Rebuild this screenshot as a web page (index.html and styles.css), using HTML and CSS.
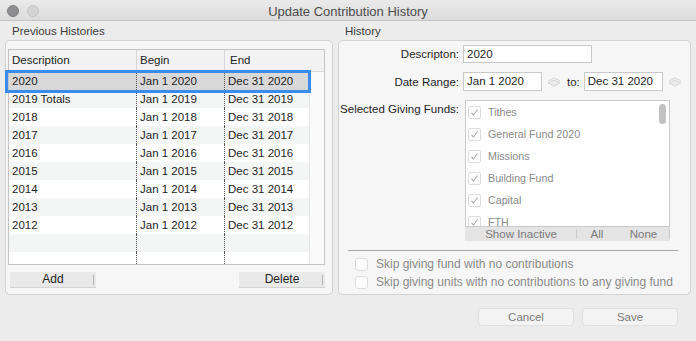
FILE: index.html
```html
<!DOCTYPE html>
<html lang="en">
<head>
<meta charset="utf-8">
<title>Update Contribution History</title>
<link rel="stylesheet" href="styles.css">
</head>
<body>
<div class="window">
  <div class="titlebar">
    <div class="lights"><span class="light close"></span><span class="light min"></span></div>
    <div class="title">Update Contribution History</div>
    <div></div>
  </div>

  <div class="main">
    <section class="col col-left">
      <div class="section-label">Previous Histories</div>
      <div class="groupbox left-box">
        <div class="table">
          <div class="thead">
            <div class="th">Description</div>
            <div class="th">Begin</div>
            <div class="th th-end">End</div>
            <div class="th"></div>
          </div>
          <div class="tbody">
            <div class="rows">
              <div class="row selected"><div class="td">2020</div><div class="td">Jan 1 2020</div><div class="td">Dec 31 2020</div></div>
              <div class="row"><div class="td">2019 Totals</div><div class="td">Jan 1 2019</div><div class="td">Dec 31 2019</div></div>
              <div class="row"><div class="td">2018</div><div class="td">Jan 1 2018</div><div class="td">Dec 31 2018</div></div>
              <div class="row"><div class="td">2017</div><div class="td">Jan 1 2017</div><div class="td">Dec 31 2017</div></div>
              <div class="row"><div class="td">2016</div><div class="td">Jan 1 2016</div><div class="td">Dec 31 2016</div></div>
              <div class="row"><div class="td">2015</div><div class="td">Jan 1 2015</div><div class="td">Dec 31 2015</div></div>
              <div class="row"><div class="td">2014</div><div class="td">Jan 1 2014</div><div class="td">Dec 31 2014</div></div>
              <div class="row"><div class="td">2013</div><div class="td">Jan 1 2013</div><div class="td">Dec 31 2013</div></div>
              <div class="row"><div class="td">2012</div><div class="td">Jan 1 2012</div><div class="td">Dec 31 2012</div></div>
              <div class="row"><div class="td"></div><div class="td"></div><div class="td"></div></div>
              <div class="row partial"><div class="td"></div><div class="td"></div><div class="td"></div></div>
            </div>
            <div class="vtrack"></div>
          </div>
        </div>
        <div class="btn-row">
          <button class="seg-btn">Add</button>
          <button class="seg-btn">Delete</button>
        </div>
      </div>
    </section>

    <section class="col col-right">
      <div class="section-label">History</div>
      <div class="groupbox right-box">
        <div class="form">
          <div class="label">Descripton:</div>
          <div class="text-input desc-input">2020</div>

          <div class="label">Date Range:</div>
          <div class="date-row">
            <div class="text-input date-input">Jan 1 2020</div>
            <svg class="cal-icon" width="14" height="10" viewBox="0 0 14 10"><path d="M1 6.2 L6.5 3 L13 5.6 L7.5 9 Z" fill="#ececec" stroke="#cdcdcd" stroke-width="0.8"/><path d="M1 4.2 L6.5 1 L13 3.6" fill="none" stroke="#cdcdcd" stroke-width="0.8"/></svg>
            <span class="to-label">to:</span>
            <div class="text-input date-input">Dec 31 2020</div>
            <svg class="cal-icon" width="14" height="10" viewBox="0 0 14 10"><path d="M1 6.2 L6.5 3 L13 5.6 L7.5 9 Z" fill="#ececec" stroke="#cdcdcd" stroke-width="0.8"/><path d="M1 4.2 L6.5 1 L13 3.6" fill="none" stroke="#cdcdcd" stroke-width="0.8"/></svg>
          </div>

          <div class="label label-top">Selected Giving Funds:</div>
          <div class="funds">
            <div class="fund-list">
              <div class="fund"><span class="cb"><svg width="9" height="9" viewBox="0 0 9 9"><path d="M1.5 5 L3.5 7 L7.5 1.5" fill="none" stroke="#a9a9a9" stroke-width="1.1"/></svg></span>Tithes</div>
              <div class="fund"><span class="cb"><svg width="9" height="9" viewBox="0 0 9 9"><path d="M1.5 5 L3.5 7 L7.5 1.5" fill="none" stroke="#a9a9a9" stroke-width="1.1"/></svg></span>General Fund 2020</div>
              <div class="fund"><span class="cb"><svg width="9" height="9" viewBox="0 0 9 9"><path d="M1.5 5 L3.5 7 L7.5 1.5" fill="none" stroke="#a9a9a9" stroke-width="1.1"/></svg></span>Missions</div>
              <div class="fund"><span class="cb"><svg width="9" height="9" viewBox="0 0 9 9"><path d="M1.5 5 L3.5 7 L7.5 1.5" fill="none" stroke="#a9a9a9" stroke-width="1.1"/></svg></span>Building Fund</div>
              <div class="fund"><span class="cb"><svg width="9" height="9" viewBox="0 0 9 9"><path d="M1.5 5 L3.5 7 L7.5 1.5" fill="none" stroke="#a9a9a9" stroke-width="1.1"/></svg></span>Capital</div>
              <div class="fund"><span class="cb"><svg width="9" height="9" viewBox="0 0 9 9"><path d="M1.5 5 L3.5 7 L7.5 1.5" fill="none" stroke="#a9a9a9" stroke-width="1.1"/></svg></span>FTH</div>
              <div class="thumb"></div>
            </div>
            <div class="fund-bar">
              <div class="fb-seg seg-show">Show Inactive</div>
              <div class="fb-seg seg-all">All</div>
              <div class="fb-seg seg-none">None</div>
            </div>
          </div>
        </div>

        <div class="separator"></div>

        <div class="skip-list">
          <div class="skip"><span class="cb2"></span>Skip giving fund with no contributions</div>
          <div class="skip"><span class="cb2"></span>Skip giving units with no contributions to any giving fund</div>
        </div>
      </div>
    </section>
  </div>

  <div class="footer">
    <button class="push">Cancel</button>
    <button class="push">Save</button>
  </div>
</div>
</body>
</html>
```

FILE: styles.css
```css
html, body {
  margin: 0;
  padding: 0;
}

body {
  width: 696px;
  height: 341px;
  overflow: hidden;
  background: #ececec;
  font-family: "Liberation Sans", Arial, sans-serif;
  color: #222;
}

button {
  font-family: inherit;
  cursor: default;
}

/* Title bar */
.titlebar {
  height: 20px;
  border-bottom: 1px solid #c4c4c4;
  background: linear-gradient(#ebebeb, #dbdbdb);
  display: grid;
  grid-template-columns: 1fr auto 1fr;
  align-items: center;
}

.lights {
  display: flex;
  gap: 8px;
  padding-left: 7px;
  padding-top: 2px;
}

.light {
  width: 12px;
  height: 12px;
  border-radius: 50%;
  box-sizing: border-box;
}

.close {
  background: #8e8e91;
  border: 1px solid #7e7e81;
}

.min {
  background: #d4d4d4;
  border: 1px solid #c3c3c3;
}

.title {
  font-size: 13px;
  color: #4c4c4c;
  padding-top: 2px;
}

/* Main columns */
.main {
  display: flex;
  gap: 5px;
  padding: 0 5px;
}

.col-left { width: 328px; }
.col-right { width: 353px; }

.section-label {
  height: 19px;
  box-sizing: border-box;
  padding: 2px 0 0 7px;
  line-height: 17px;
  font-size: 11.5px;
  color: #3c3c3c;
}

.groupbox {
  height: 255px;
  box-sizing: border-box;
  border: 1px solid #d3d3d3;
  border-radius: 5px;
  background: #f6f6f6;
}

.left-box {
  padding: 8px 7px 0 2px;
}

/* Table */
.table {
  height: 216px;
  box-sizing: border-box;
  border: 1px solid #c4c4c4;
  background: #fff;
  display: flex;
  flex-direction: column;
}

.thead {
  height: 22px;
  flex: none;
  box-sizing: border-box;
  border-bottom: 1px solid #dadada;
  background: #f2f2f2;
  display: grid;
  grid-template-columns: 127px 88px 85px 1fr;
  font-size: 11.5px;
  line-height: 21px;
  color: #222;
}

.th { padding-left: 3px; }
.th:nth-child(2),
.th:nth-child(3) { border-left: 1px solid #d6d6d6; }
.th-end { padding-left: 5px; }

.tbody {
  flex: 1;
  display: flex;
}

.rows { width: 300px; }

.vtrack {
  flex: 1;
  border-left: 1px solid #e4e4e4;
  background: #fafafa;
}

.row {
  height: 18px;
  display: grid;
  grid-template-columns: 127px 88px 85px;
  font-size: 11.5px;
  line-height: 18px;
  color: #1e1e1e;
}

.row:nth-child(even) { background: #f4f5f5; }
.row.partial { height: 12px; }

.row.selected {
  background: #d8d8d8;
  position: relative;
}

/* focus ring drawn over the neighbouring rows */
.row.selected::after {
  content: "";
  position: absolute;
  left: -4px;
  right: -2px;
  top: -2px;
  bottom: -3px;
  border: 3px solid #3a8cec;
  z-index: 2;
  pointer-events: none;
}

.td {
  padding-left: 3px;
  white-space: nowrap;
}

.td + .td { border-left: 1px dotted #555; }

.btn-row {
  display: flex;
  justify-content: space-between;
  margin-top: 7px;
  padding-left: 2px;
}

.seg-btn {
  width: 86px;
  height: 16px;
  padding: 0;
  border: 0;
  border-bottom: 1px solid #d3d3d3;
  background: #e9e9e9;
  font-size: 12px;
  line-height: 15px;
  color: #222;
  position: relative;
}

.seg-btn::after {
  content: "";
  position: absolute;
  right: 2px;
  top: 3px;
  width: 1px;
  height: 10px;
  background: #b6b6b6;
}

/* Right form */
.right-box {
  padding-top: 4px;
}

.form {
  display: grid;
  grid-template-columns: 120px auto;
  column-gap: 4px;
  row-gap: 9px;
  align-items: center;
  justify-items: start;
}

.label {
  justify-self: end;
  text-align: right;
  font-size: 11.5px;
  white-space: nowrap;
  color: #1e1e1e;
}

.label-top {
  align-self: start;
  line-height: 18px;
}

.text-input {
  height: 18px;
  box-sizing: border-box;
  border: 1px solid #c9c9c9;
  background: #fff;
  font-size: 11.5px;
  line-height: 16px;
  padding-left: 3px;
  color: #1e1e1e;
  white-space: nowrap;
}

.desc-input { width: 129px; }

.date-row {
  display: flex;
  align-items: center;
}

.date-input {
  width: 79px;
  height: 19px;
  line-height: 17px;
}

.cal-icon {
  margin-left: 5px;
  flex: none;
}

.to-label {
  margin-left: 6px;
  margin-right: 4px;
  font-size: 11.5px;
  color: #1e1e1e;
}

.funds {
  width: 205px;
  margin-left: 2px;
}

.fund-list {
  height: 127px;
  box-sizing: border-box;
  border: 1px solid #cacaca;
  background: #fff;
  overflow: hidden;
  position: relative;
}

.fund {
  height: 22px;
  display: flex;
  align-items: center;
  padding-left: 2px;
  font-size: 10.7px;
  color: #8a8a8a;
  white-space: nowrap;
}

.cb {
  width: 13px;
  height: 13px;
  flex: none;
  box-sizing: border-box;
  border: 1px solid #dcdcdc;
  border-radius: 2px;
  background: #fff;
  margin-right: 7px;
  display: flex;
  align-items: center;
  justify-content: center;
}

.thumb {
  position: absolute;
  right: 3px;
  top: 3px;
  width: 7px;
  height: 20px;
  border-radius: 4px;
  background: #c2c2c2;
}

.fund-bar {
  height: 14px;
  background: #e4e4e4;
  display: flex;
  font-size: 11.5px;
  line-height: 14px;
  color: #7b7b7b;
}

.fb-seg {
  text-align: center;
  position: relative;
}

.seg-show { width: 112px; }
.seg-all { width: 40px; }
.seg-none { width: 53px; }

.seg-show::after,
.seg-none::after {
  content: "";
  position: absolute;
  right: 0;
  top: 2px;
  width: 1px;
  height: 10px;
  background: #cbcbcb;
}

.separator {
  margin: 9px 12px 0 9px;
  border-top: 1px solid #a6a6a6;
}

.skip-list {
  padding: 4px 0 0 16px;
}

.skip {
  height: 18px;
  display: flex;
  align-items: center;
  font-size: 12px;
  color: #8a8a8a;
  white-space: nowrap;
}

.cb2 {
  width: 13px;
  height: 13px;
  flex: none;
  box-sizing: border-box;
  border: 1px solid #dcdcdc;
  border-radius: 3px;
  background: #fcfcfc;
  margin-right: 8px;
}

/* Footer */
.footer {
  display: flex;
  justify-content: flex-end;
  gap: 8px;
  padding: 13px 18px 0 0;
}

.push {
  width: 96px;
  height: 18px;
  padding: 0;
  border: 1px solid #e0e0e0;
  border-radius: 4px;
  background: #f3f3f3;
  color: #7c7c7c;
  font-size: 11.5px;
}
```
